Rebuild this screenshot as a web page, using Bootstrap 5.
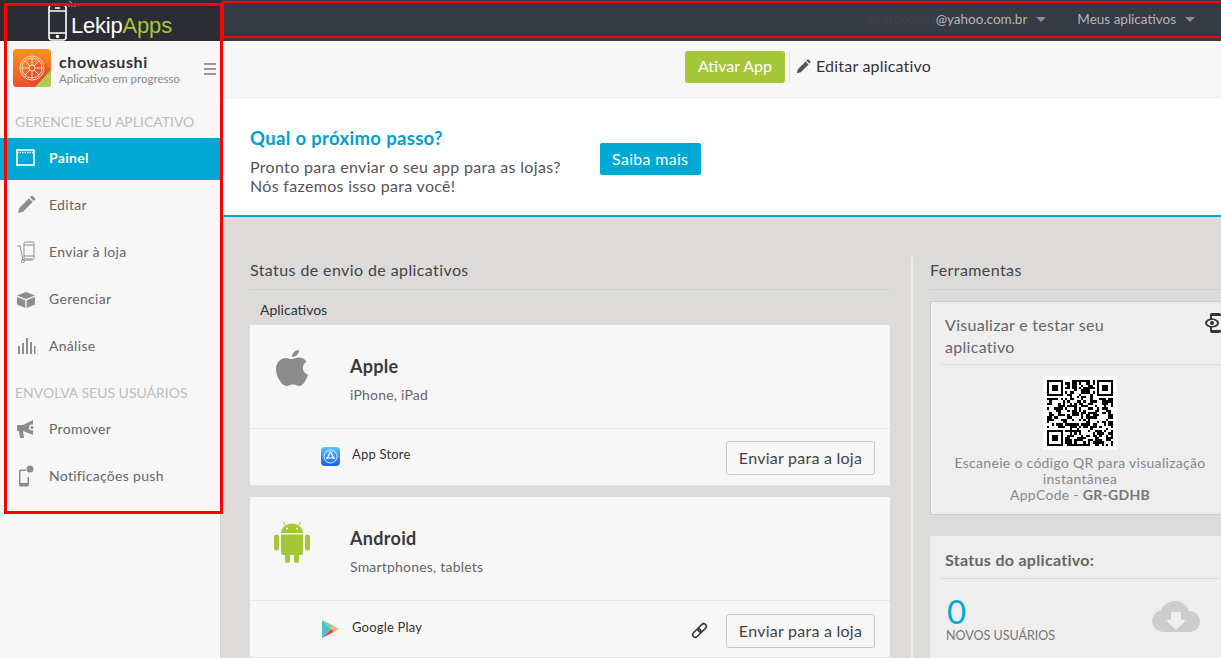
<!DOCTYPE html>
<html lang="pt-BR">

<head>
    <meta charset="UTF-8">
    <meta name="viewport" content="width=device-width, initial-scale=1.0">
    <title>LekipApps - Painel</title>
    <link href="https://cdn.jsdelivr.net/npm/bootstrap@5.3.3/dist/css/bootstrap.min.css" rel="stylesheet">
    <script src="https://cdn.jsdelivr.net/npm/bootstrap@5.3.3/dist/js/bootstrap.bundle.min.js"></script>
    <style>
        html, body { height: 658px; overflow: hidden; }
        body { font-family: "Lato", "Liberation Sans", sans-serif; background: #dcdbd9; color: #3b3b3b; font-size: 14px; position: relative; }
        .topbar { height: 41px; background: #373b44; }
        .logo-box { width: 221px; background: #2b2d35; padding-left: 47px; }
        .logo-word { font-family: "Liberation Sans", sans-serif; font-size: 22px; color: #fff; line-height: 1; margin: 15px 0 0 -6px; letter-spacing: -.2px; }
        .logo-word span { color: #a6c63a; }
        .top-right { padding-bottom: 3px; }
        .top-link { color: #b4b6bb; font-size: 13.5px; }
        .top-mail { margin-right: 31px; }
        .top-apps { margin-right: 26px; }
        .faint-text { color: #3f434b; }
        .caret-down { width: 0; height: 0; border-left: 5px solid transparent; border-right: 5px solid transparent; border-top: 5px solid #8b8e94; margin-left: 9px; }
        .side { width: 221px; height: 617px; background: #f7f7f7; border-right: 1px solid #d5d5d5; flex-shrink: 0; }
        .app-head { padding: 8px 0 0 13px; height: 72px; }
        .app-icon { width: 38px; height: 38px; border-radius: 3px; margin-right: 8px; flex-shrink: 0; }
        .app-name { font-size: 16px; font-weight: 700; color: #333; line-height: 18px; margin-top: 4px; letter-spacing: .6px; width: 124px; }
        .app-sub { font-size: 11.5px; color: #8a8a8a; line-height: 16px; white-space: nowrap; }
        .burger { width: 12px; margin: 14px 0 0 21px; border-top: 2px solid #999; border-bottom: 2px solid #999; height: 12px; position: relative; }
        .burger::after { content: ""; position: absolute; left: 0; right: 0; top: 3px; border-top: 2px solid #999; }
        .side-head { font-size: 14px; font-weight: 400; color: #bdbdbd; padding-left: 15px; line-height: 18px; margin: 0; }
        .head-first { margin-bottom: 7px; }
        .head-second { margin-top: 14px; margin-bottom: 4px; }
        .side-item { height: 47px; color: #666; font-size: 14px; padding: 0 0 2px 16px; text-decoration: none; letter-spacing: .3px; }
        .side-item svg { width: 20px; height: 22px; margin-right: 13px; flex-shrink: 0; fill: #8d8d8d; }
        .side-item.on { background: #00a8d4; color: #fff; font-weight: 700; height: 42px; margin-bottom: 2px; padding-bottom: 3px; }
        .side-item.on svg { fill: none; stroke: #fff; }
        .side-item svg.line-ico { fill: none; stroke: #8d8d8d; stroke-width: 1; }
        .sub-head { height: 57px; background: #f7f7f7; border-bottom: 1px solid #eee; padding: 10px 0 0 464px; }
        .btn-ativar { background: #a6c63a; color: #fff; font-size: 16px; width: 100px; padding: 0 0 2px; height: 32px; border: 0; border-radius: 3px; }
        .sub-sep { width: 1px; height: 32px; background: #e2e2e2; margin: 0 6px 0 4px; }
        .edit-link { color: #333; font-size: 16px; height: 30px; letter-spacing: .2px; }
        .banner { height: 119px; background: #fff; border-bottom: 2px solid #00a8d4; padding: 28px 0 0 29px; }
        .banner h2 { font-size: 18.5px; font-weight: 700; color: #00a0ce; line-height: 24px; margin: 0 0 7px; letter-spacing: .33px; }
        .banner p { font-size: 16px; line-height: 19px; color: #555; margin: 0; letter-spacing: .32px; white-space: nowrap; }
        .btn-saiba { background: #00a8d4; color: #fff; font-size: 16px; width: 101px; padding: 0; height: 32px; border: 0; border-radius: 2px; margin: 17px 0 0 39px; letter-spacing: .3px; }
        .content-area { padding: 0 0 0 29px; }
        .left-col { width: 640px; flex-shrink: 0; padding-top: 41px; }
        .col-rule { width: 2px; background: #eeeeec; margin: 40px 17px 0 21px; flex-shrink: 0; }
        .right-col { flex-grow: 1; padding-top: 41px; min-width: 0; }
        .sec-title { font-size: 16px; color: #444; line-height: 24px; padding-bottom: 7px; border-bottom: 1px solid #cfcfcd; margin: 0; font-weight: 400; letter-spacing: .4px; }
        .sec-sub { font-size: 14px; color: #333; padding: 10px 0 6px 10px; line-height: 19px; }
        .store-box { background: #f7f7f7; margin-bottom: 11.4px; border-bottom: 1px solid #e4e4e2; }
        .store-top { height: 104px; border-bottom: 1px solid #e6e6e6; }
        .store-logo { width: 100px; flex-shrink: 0; padding: 24px 0 0 25px; }
        .store-logo-droid { padding-top: 23px; padding-left: 24px; }
        .store-name { font-size: 18px; font-weight: 700; color: #3a3a3a; line-height: 24px; padding-top: 29px; letter-spacing: .3px; }
        .store-desc { font-size: 14px; color: #666; line-height: 20px; margin-top: 7px; letter-spacing: .2px; }
        .store-bottom { height: 56px; padding: 0 15px 0 71px; }
        .store-bottom .store-ico { width: 19px; height: 20px; margin-right: 12px; flex-shrink: 0; }
        .store-label { font-size: 13px; color: #333; letter-spacing: .2px; margin-top: -4px; }
        .link-ico { margin: 3px 18px 0 0; }
        .btn-enviar { background: #f7f7f7; border: 1px solid #c9c9c9; border-radius: 3px; color: #444; font-size: 16px; height: 34px; width: 149px; padding: 0; margin-top: 2.8px; letter-spacing: .25px; }
        .tool-box { background: #eee; border: 1px solid #c9c9c9; border-right: 0; height: 214px; margin-top: 11px; padding: 0 0 0 10px; position: relative; }
        .tool-title { font-size: 16px; color: #666; line-height: 22px; padding: 12px 4px 6px 4px; border-bottom: 1px solid #d9d9d9; margin: 0; width: 280px; letter-spacing: .3px; }
        .tool-title span { display: block; width: 185px; }
        .tool-eye { position: absolute; right: 0; top: 10px; width: 16px; height: 22px; }
        .qr-box { width: 74px; height: 74px; background: #fff; padding: 4px; margin: 11px auto 0 102px; }
        .qr-text { font-size: 14px; line-height: 16px; color: #888; text-align: center; width: 278px; margin-top: 5px; letter-spacing: .3px; }
        .qr-text b { color: #777; font-weight: 700; }
        .status-box { background: #eee; margin-top: 21px; padding-left: 11px; height: 130px; }
        .status-title { font-size: 16px; font-weight: 700; color: #666; line-height: 22px; padding: 13px 4px 7px 4px; border-bottom: 1px solid #d9d9d9; width: 279px; margin: 0; letter-spacing: .3px; }
        .status-left { width: 210px; }
        .status-num { font-size: 33px; color: #00a8d4; line-height: 34px; margin: 15px 0 0 6px; }
        .status-lbl { font-size: 12.5px; color: #777; line-height: 16px; margin-left: 5px; }
        .status-cloud { width: 50px; height: 32px; margin-top: 22px; flex-shrink: 0; }
        .redline { position: absolute; border-style: solid; border-color: #f00; pointer-events: none; }
        .redline.one { left: 4px; top: 3px; width: 219px; height: 511px; border-width: 3px; }
        .redline.two { left: 222px; top: 1px; width: 1001px; height: 37px; border-width: 2px; }
    </style>
</head>

<body>
    <div class="topbar d-flex">
        <div class="logo-box d-flex">
            <svg width="30" height="41" viewBox="0 0 30 41" fill="none" stroke="#fff" stroke-width="1.6">
                <rect x="2" y="5" width="17" height="35" rx="3"/>
                <path d="M2 11h17M2 33h17M8 8h5"/>
                <circle cx="10.500" cy="36.500" r="1" fill="#fff"/>
                <path d="M22 5.500v1.500M25 5.500v1.500M28 5.500v1.500M22 1l3 2" stroke-width="1" stroke="#bbb"/>
            </svg>
            <div class="logo-word">Lekip<span>Apps</span></div>
        </div>
        <div class="top-right flex-grow-1 d-flex align-items-center justify-content-end">
            <div class="top-link top-mail d-flex align-items-center"><span class="faint-text">ricardo.dias</span>@yahoo.com.br<i class="caret-down"></i></div>
            <div class="top-link top-apps d-flex align-items-center">Meus aplicativos<i class="caret-down"></i></div>
        </div>
    </div>

    <div class="d-flex">
        <div class="side">
            <div class="app-head d-flex">
                <svg class="app-icon" viewBox="0 0 38 38">
                    <defs><linearGradient id="ag" x1="0" y1="0" x2="0" y2="1"><stop offset="0" stop-color="#f7931e"/><stop offset="1" stop-color="#e9502b"/></linearGradient></defs>
                    <rect width="38" height="38" rx="3" fill="url(#ag)"/>
                    <path d="M27 10L38 21v14a3 3 0 0 1-3 3H22L10 27z" fill="#d9482a" opacity=".55"/>
                    <path d="M38 21v14a3 3 0 0 1-3 3H22z" fill="#b5c94c"/>
                    <g fill="none" stroke="#fbd9c4" stroke-width="1">
                        <circle cx="19" cy="19" r="12"/><circle cx="19" cy="19" r="10"/><circle cx="19" cy="19" r="3"/>
                        <path d="M19 9v7M19 22v7M9 19h7M22 19h7M12 12l5 5M21 21l5 5M26 12l-5 5M17 21l-5 5"/>
                    </g>
                </svg>
                <div>
                    <div class="app-name">chowasushi</div>
                    <div class="app-sub">Aplicativo em progresso</div>
                </div>
                <div class="burger"></div>
            </div>
            <h6 class="side-head head-first">GERENCIE SEU APLICATIVO</h6>
            <a class="side-item on d-flex align-items-center" href="#">
                <svg viewBox="0 0 20 22" stroke-width="1.6"><rect x="1" y="3" width="17" height="15"/><path d="M1 5.500h17" stroke-width="1.500" stroke-dasharray="1.500 1"/></svg>Painel
            </a>
            <a class="side-item d-flex align-items-center" href="#">
                <svg viewBox="0 0 20 22"><path d="M2 19l1.300-5L13 4.300l3.700 3.700L7 17.700zM14 3.300l1.300-1.300a1 1 0 0 1 1.400 0l2.300 2.300a1 1 0 0 1 0 1.400L17.700 7z"/></svg>Editar
            </a>
            <a class="side-item d-flex align-items-center" href="#">
                <svg class="line-ico" viewBox="0 0 20 22"><rect x="8" y="1" width="10" height="17" rx="1.500"/><path d="M1 5h3l3 14h10M8 4h10M8 15h10"/><circle cx="7" cy="20" r="1.500"/></svg>Enviar à loja
            </a>
            <a class="side-item d-flex align-items-center" href="#">
                <svg viewBox="0 0 20 22"><path d="M10 4l9 3.500-9 3.500-9-3.500zM1 9l8.300 3.200V20L1 16.500zM19 9l-8.300 3.200V20l8.300-3.500z"/></svg>Gerenciar
            </a>
            <a class="side-item d-flex align-items-center" href="#">
                <svg viewBox="0 0 20 22"><path d="M2 11h2v8H2zM6 8h2v11H6zM10 3h2v16h-2zM14 7h2v12h-2zM18 11h1.500v8H18z"/></svg>Análise
            </a>
            <h6 class="side-head head-second">ENVOLVA SEUS USUÁRIOS</h6>
            <a class="side-item d-flex align-items-center" href="#">
                <svg viewBox="0 0 20 22"><path d="M1 7h6l10-5v15L7 13v0l1 7H4l-1-7H1z"/><circle cx="16" cy="9.500" r="3" fill="#f7f7f7"/><circle cx="16" cy="9.500" r="1.500"/></svg>Promover
            </a>
            <a class="side-item d-flex align-items-center" href="#">
                <svg viewBox="0 0 20 22"><path d="M3 6a1.500 1.500 0 0 1 1.500-1.500H10V6H4.500v12h7v-6H13v8a1.500 1.500 0 0 1-1.500 1.500h-7A1.500 1.500 0 0 1 3 20z"/><circle cx="14" cy="4" r="3.500"/></svg>Notificações push
            </a>
        </div>

        <div class="flex-grow-1 overflow-hidden">
            <div class="sub-head d-flex">
                <button type="button" class="btn-ativar">Ativar App</button>
                <div class="sub-sep"></div>
                <div class="edit-link d-flex align-items-center">
                    <svg width="16" height="16" viewBox="0 0 20 20" class="me-1" fill="#555"><path d="M1 19l1.300-5L12 4.300l3.700 3.700L6 17.700zM13 3.300l1.300-1.300a1 1 0 0 1 1.400 0l2.300 2.300a1 1 0 0 1 0 1.400L16.700 7z"/></svg>Editar aplicativo
                </div>
            </div>

            <div class="banner d-flex">
                <div>
                    <h2>Qual o próximo passo?</h2>
                    <p>Pronto para enviar o seu app para as lojas?<br>Nós fazemos isso para você!</p>
                </div>
                <button type="button" class="btn-saiba">Saiba mais</button>
            </div>

            <div class="content-area d-flex">
                <div class="left-col">
                    <h5 class="sec-title">Status de envio de aplicativos</h5>
                    <div class="sec-sub">Aplicativos</div>

                    <div class="store-box">
                        <div class="store-top d-flex">
                            <div class="store-logo">
                                <svg width="34" height="42" viewBox="0 0 34 42" fill="#8c8c8c"><path d="M24 1c.3 3-2.500 7-7 7-.3-3.500 3-7 7-7zM17 10c2 0 4-1.500 7-1.500 3.500 0 6 1.700 7.500 4-5.500 3.300-4.500 11 1.500 13.200-1.500 4.500-5 11.300-8.500 11.300-2.500 0-3.500-1.500-6.500-1.500s-4 1.500-6.500 1.500C7 37 1 28 1 20.500 1 13 6 9 10.500 9c2.700 0 5 1.500 6.500 1z"/></svg>
                            </div>
                            <div>
                                <div class="store-name">Apple</div>
                                <div class="store-desc">iPhone, iPad</div>
                            </div>
                        </div>
                        <div class="store-bottom d-flex align-items-center">
                            <svg class="store-ico" viewBox="0 0 19 20">
                                <defs><linearGradient id="as" x1="0" y1="0" x2="0" y2="1"><stop offset="0" stop-color="#5fc3f7"/><stop offset="1" stop-color="#1a5cf0"/></linearGradient></defs>
                                <rect width="19" height="19" rx="4" fill="url(#as)"/>
                                <circle cx="9.500" cy="9.500" r="6.500" fill="none" stroke="#cfeaff" stroke-width="1"/>
                                <path d="M9.500 4.500l3.500 7.500M9.500 4.500L6 12M5 11h9" stroke="#fff" stroke-width="1.200" fill="none"/>
                            </svg>
                            <div class="store-label flex-grow-1">App Store</div>
                            <button type="button" class="btn-enviar">Enviar para a loja</button>
                        </div>
                    </div>

                    <div class="store-box">
                        <div class="store-top d-flex">
                            <div class="store-logo store-logo-droid">
                                <svg width="36" height="43" viewBox="0 0 36 43" fill="#a6c63a"><path d="M7 13a11 9.500 0 0 1 22 0zM7 14.500h22V33a2 2 0 0 1-2 2H9a2 2 0 0 1-2-2z"/><rect y="14.500" width="5" height="16" rx="2.500"/><rect x="31" y="14.500" width="5" height="16" rx="2.500"/><rect x="11" y="32" width="5" height="11" rx="2.500"/><rect x="20" y="32" width="5" height="11" rx="2.500"/><path d="M11 5L9 1.500M25 5l2-3.500" stroke="#a6c63a" stroke-width="1" fill="none"/><circle cx="13" cy="8.500" r="1" fill="#f7f7f7"/><circle cx="23" cy="8.500" r="1" fill="#f7f7f7"/></svg>
                            </div>
                            <div>
                                <div class="store-name">Android</div>
                                <div class="store-desc">Smartphones, tablets</div>
                            </div>
                        </div>
                        <div class="store-bottom d-flex align-items-center">
                            <svg class="store-ico" viewBox="0 0 19 20">
                                <path d="M1 1l9 9-9 9z" fill="#4cc3c8"/>
                                <path d="M1 1l12 6-3 3z" fill="#8bc9a0"/>
                                <path d="M1 19l12-6-3-3z" fill="#d9534f"/>
                                <path d="M13 7l5 3-5 3-3-3z" fill="#f4b266"/>
                            </svg>
                            <div class="store-label flex-grow-1">Google Play</div>
                            <svg width="17" height="17" viewBox="0 0 16 16" fill="none" stroke="#333" stroke-width="1.500" class="link-ico"><g transform="rotate(-45 8 8)"><rect x="0" y="5.500" width="9" height="5" rx="2.500"/><rect x="7" y="5.500" width="9" height="5" rx="2.500"/></g></svg>
                            <button type="button" class="btn-enviar">Enviar para a loja</button>
                        </div>
                    </div>
                </div>

                <div class="col-rule"></div>

                <div class="right-col">
                    <h5 class="sec-title">Ferramentas</h5>
                    <div class="tool-box">
                        <h5 class="tool-title fw-normal"><span>Visualizar e testar seu aplicativo</span></h5>
                        <svg class="tool-eye" viewBox="0 0 16 22"><rect x="5" y="1" width="11" height="20" rx="2" fill="#333"/><rect x="7" y="4" width="9" height="14" fill="#eee"/><ellipse cx="7" cy="11" rx="7" ry="4.500" fill="#333"/><ellipse cx="7" cy="11" rx="5" ry="3" fill="#eee"/><circle cx="7" cy="11" r="2" fill="#333"/></svg>
                        <div class="qr-box"><svg id="qr" width="66" height="66" viewBox="0 0 29 29" shape-rendering="crispEdges"></svg></div>
                        <div class="qr-text">Escaneie o código QR para visualização instantânea<br>AppCode - <b>GR-GDHB</b></div>
                    </div>
                    <div class="status-box">
                        <h5 class="status-title">Status do aplicativo:</h5>
                        <div class="d-flex">
                            <div class="status-left">
                                <div class="status-num">0</div>
                                <div class="status-lbl">NOVOS USUÁRIOS</div>
                            </div>
                            <svg class="status-cloud" viewBox="0 0 50 32"><path d="M12 31a11 11 0 0 1-2-21.800A15 15 0 0 1 38 10a10.500 10.500 0 0 1 1 21z" fill="#cdcdcd"/><path d="M20 11h10v8h5L25 29 15 19h5z" fill="#eee"/></svg>
                        </div>
                    </div>
                </div>
            </div>
        </div>
    </div>

    <div class="redline one"></div>
    <div class="redline two"></div>

    <script>
        // finder squares plus a fixed pseudo random fill for the QR
        let qr = document.getElementById("qr");
        let n = 29, cells = "", seed = 73;
        function finder(x, y) {
            return `<path d="M${x} ${y}h7v7h-7zM${x + 1} ${y + 1}v5h5v-5z" fill-rule="evenodd"/><rect x="${x + 2}" y="${y + 2}" width="3" height="3"/>`;
        }
        for (let y = 0; y < n; y++) {
            for (let x = 0; x < n; x++) {
                seed = (seed * 1103515245 + 12345) % 2147483648;
                let inFinder = (x < 8 && y < 8) || (x > 20 && y < 8) || (x < 8 && y > 20);
                if (!inFinder && (seed >> 16) % 2) {
                    cells += `<rect x="${x}" y="${y}" width="1" height="1"/>`;
                }
            }
        }
        qr.innerHTML = cells + finder(0, 0) + finder(22, 0) + finder(0, 22);
    </script>
</body>

</html>
